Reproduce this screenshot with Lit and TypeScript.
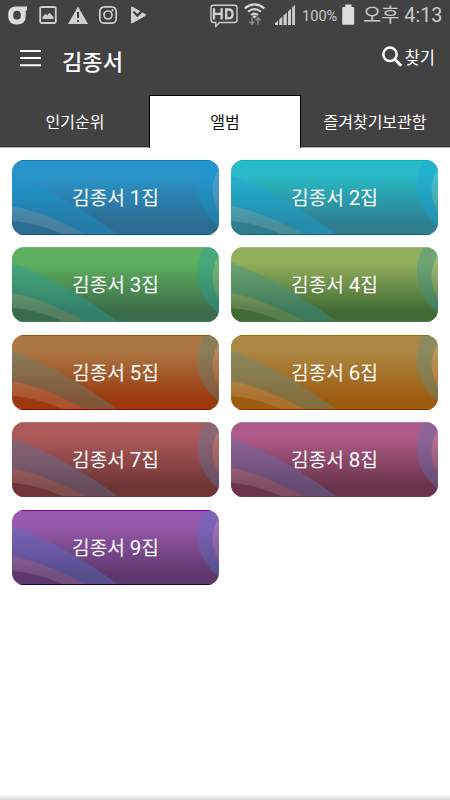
import { LitElement, html, css, svg } from "lit";
import { customElement, property, state } from "lit/decorators.js";
import { classMap } from "lit/directives/class-map.js";

const albums = [
  { n: 1, top: "#2994c9", bottom: "#2c6c91", edge: "#0680bb", foot: "#00588d", band: "#1599d4" },
  { n: 2, top: "#29bac7", bottom: "#2f7d8e", edge: "#08b5c5", foot: "#006c86", band: "#16a6dc" },
  { n: 3, top: "#5eb05f", bottom: "#3b6c49", edge: "#75b777", foot: "#3b7b60", band: "#23a0a7" },
  { n: 4, top: "#92af5c", bottom: "#416b34", edge: "#a1b97a", foot: "#44794e", band: "#36969b" },
  { n: 5, top: "#ab7844", bottom: "#9c390f", edge: "#985505", foot: "#8b0800", band: "#548a83" },
  { n: 6, top: "#ab8844", bottom: "#9e5c0e", edge: "#937100", foot: "#8f2e00", band: "#56908c" },
  { n: 7, top: "#ad5a5a", bottom: "#6f3434", edge: "#b47577", foot: "#6e3f42", band: "#547ba9" },
  { n: 8, top: "#ad5a88", bottom: "#6b334b", edge: "#b4759a", foot: "#6c4058", band: "#5a78b4" },
  { n: 9, top: "#985aad", bottom: "#5e376c", edge: "#81009f", foot: "#200052", band: "#4c78c8" },
];

@customElement("album-card")
export class AlbumCard extends LitElement {
  @property({ attribute: false }) album = albums[0];

  static styles = css`
    :host { display: block; }
    .card {
      position: relative; height: 75px; box-sizing: border-box; overflow: hidden;
      border-radius: 12px; display: flex; align-items: center; justify-content: center;
      color: #fff; font: 19.2px/28px Roboto, "Noto Sans CJK KR", sans-serif; padding: 2px 0 0 0;
    }
    .art { position: absolute; inset: 0; width: 100%; height: 100%; }
    .label { position: relative; white-space: pre; }
    .num { font-size: 20.5px; }
  `;

  render() {
    const a = this.album;
    return html`<div class="card">
      <svg class="art" viewBox="0 0 206 75" preserveAspectRatio="none">
        <defs>
          <linearGradient id="fill" x1="0" y1="0" x2="0" y2="1">
            <stop offset="0.2" stop-color=${a.top}></stop>
            <stop offset="0.86" stop-color=${a.bottom}></stop>
          </linearGradient>
        </defs>
        <rect width="206" height="75" fill="url(#fill)"></rect>
        <path d="M0 15.5C36 29 73 50 106 75H75C52 63 27 51 0 46Z" fill=${a.band} opacity=".37"></path>
        <path d="M0 46C27 51 52 63 75 75H53C34 67 17 62 0 61Z" fill="#fff" opacity=".13"></path>
        <path d="M191 0C181 21 182 48 206 67V52C198 39 197 22 206 8V0Z" fill=${a.band} opacity=".37"></path>
        <path d="M206 8C197 22 198 39 206 52Z" fill="#fff" opacity=".13"></path>
        <path d="M0 .5H206" stroke=${a.edge}></path>
        <path d="M0 74.5H206" stroke=${a.foot}></path>
      </svg>
      <span class="label">김종서 <span class="num">${a.n}</span>집</span>
    </div>`;
  }
}

@customElement("status-bar")
export class StatusBar extends LitElement {
  static styles = css`
    :host {
      display: flex; height: 32px; box-sizing: border-box; justify-content: space-between;
      color: #c8c8c8; font-family: Roboto, "Noto Sans CJK KR", sans-serif;
    }
    .glyphs { width: 150px; height: 32px; flex: none; }
    .right { display: flex; align-items: center; height: 32px; padding-right: 8px; }
    .signals { width: 100px; height: 32px; flex: none; }
    .percent { font-size: 14.6px; width: 37px; white-space: nowrap; }
    .battery { width: 24px; height: 32px; flex: none; }
    .time { font-size: 19.8px; line-height: 32px; white-space: pre; width: 79px; }
  `;

  render() {
    return html`
      <svg class="glyphs" viewBox="0 0 150 32">
        <path d="M27 6.5H17C11 6.5 8.2 9 8.2 15C8.2 21.5 11 24.5 17 24.5C23 24.5 25.7 21.5 25.7 15.5V10.5H27ZM17 10.8C19.7 10.8 20.8 12 20.8 15C20.8 18.5 19.7 19.6 17 19.6C14.3 19.6 13.2 18.5 13.2 15C13.2 12 14.3 10.8 17 10.8Z" fill="#ddd" fill-rule="evenodd"></path>
        <rect x="40.2" y="7" width="15.6" height="16" rx="1.5" fill="none" stroke="#cfcfcf" stroke-width="1.8"></rect>
        <path d="M42.5 19V17L45.5 13.7L47.3 15.5L49.5 12.7L53.5 17V19Z" fill="#cfcfcf"></path>
        <path d="M78 6.5L88 24H68Z" fill="#cfcfcf"></path>
        <path d="M78 12V18M78 20V22" stroke="#424242" stroke-width="2"></path>
        <rect x="99.8" y="6.8" width="16.4" height="16.4" rx="4.5" fill="none" stroke="#cfcfcf" stroke-width="1.7"></rect>
        <circle cx="108" cy="15" r="4" fill="none" stroke="#cfcfcf" stroke-width="1.7"></circle>
        <circle cx="112.6" cy="10.4" r="1.1" fill="#cfcfcf"></circle>
        <path d="M131 7.2C131 6.3 132 6.3 133 7L146 14.4V15.6L133 23C131.6 23.8 131 23.4 131 22Z" fill="#cfcfcf"></path>
        <path d="M133.5 11.8L137.3 15.6L144.5 8.6" fill="none" stroke="#424242" stroke-width="2.2"></path>
      </svg>
      <div class="right">
        <svg class="signals" viewBox="202 0 100 32">
          <path d="M213.5 5.2H234.5Q237 5.2 237 7.7V19.5Q237 22.5 234.5 22.5H219.5L215.8 26.3V22.5H213.5Q211 22.5 211 19.5V7.7Q211 5.2 213.5 5.2Z" fill="none" stroke="#cdcdcd" stroke-width="1.4"></path>
          <path d="M214 8.3V19.5M221.6 8.3V19.5M214 13.8H221.6M226.2 9.5V18.3H228.3Q232.6 18.3 232.6 13.9Q232.6 9.5 228.3 9.5Z" fill="none" stroke="#d2d2d2" stroke-width="2.3"></path>
          <path d="M244.7 8.4Q254.5 .5 264.3 8.4M248 11.8Q254.5 6.4 261 11.8M251 15Q254.5 12.2 258 15" fill="none" stroke="#d5d5d5" stroke-width="2.1"></path>
          <path d="M254.5 18.5L252.4 16.4A3 3 0 0 1 256.6 16.4Z" fill="#d5d5d5"></path>
          <path d="M252 17.5V24M249.5 21.5L252 24.3L254.5 21.5M258 24.5V18M255.5 20.5L258 17.8L260.5 20.5" fill="none" stroke="#858585" stroke-width="1.6"></path>
          <path d="M275 25V23.3L278 20.7V25ZM279.2 25V19.6L282.3 16.7V25ZM283.5 25V15.5L286.8 12.4V25ZM288 25V11.4L291 8.5V25ZM292.2 25V7.5L295 4.8V25Z" fill="#cdcdcd"></path>
        </svg>
        <span class="percent">100%</span>
        <svg class="battery" viewBox="339 0 24 32">
          <path d="M345.3 4.6H351.4V7H353.2Q354.2 7 354.2 8V23.8Q354.2 24.8 353.2 24.8H343.2Q342.2 24.8 342.2 23.8V8Q342.2 7 343.2 7H345.3Z" fill="#dcdcdc"></path>
        </svg>
        <span class="time">오후 4:13</span>
      </div>`;
  }
}

@customElement("app-root")
export class AppRoot extends LitElement {
  @state() private active = 1;

  static styles = css`
    :host {
      display: flex; flex-direction: column; width: 450px; height: 800px; overflow: hidden;
      background: #fff; color: #fff; font-family: "Noto Sans CJK KR", sans-serif;
    }
    .top { background: #424242; }
    .header { height: 64px; display: flex; align-items: flex-start; box-sizing: border-box; padding: 0 15px 0 20px; }
    .menu { width: 22px; height: 22px; margin-top: 16px; flex: none; }
    .title { font-size: 22.1px; line-height: 32px; font-weight: 500; margin: 12px auto 0 20px; }
    .search { display: flex; align-items: center; margin-top: 12px; font-size: 16.5px; line-height: 26px; }
    .lens { width: 23px; height: 24px; }
    .tabs { height: 51px; display: grid; grid-template-columns: repeat(3, 1fr); box-sizing: border-box; border-bottom: 1px solid #303030; }
    .tab { display: flex; align-items: center; justify-content: center; font-size: 16px; line-height: 24px; padding-bottom: 1px; }
    .on { position: relative; z-index: 1; background: #fff; color: #111; margin-bottom: -2px; box-shadow: 1px 0 #000, 0 -1px #000, -1px 0 #000, -1px -1px #000, 1px -1px #000; padding-bottom: 3px; }
    .grid { display: grid; grid-template-columns: 207px 207px; gap: 12.4px 12px; padding: 13px 12px; flex: 1; align-content: start; box-shadow: inset 0 1px #b4b4b4; }
    .shade { height: 5px; background: linear-gradient(#fafafa, #d8d8d8); }
  `;

  render() {
    const tabs = ["인기순위", "앨범", "즐겨찾기보관함"];
    return html`
      <div class="top">
        <status-bar></status-bar>
        <div class="header">
          <svg class="menu" viewBox="0 0 22 22">
            <path d="M0 3H21M0 10H21M0 17.3H21" stroke="#fff" stroke-width="2"></path>
          </svg>
          <span class="title">김종서</span>
          <div class="search">
            <svg class="lens" viewBox="0 0 23 24">
              ${svg`<circle cx="8" cy="9.3" r="6.7" fill="none" stroke="#fff" stroke-width="2.5"></circle>
              <path d="M12.5 14L19.2 20.8" stroke="#fff" stroke-width="3"></path>`}
            </svg>
            <span>찾기</span>
          </div>
        </div>
        <div class="tabs">
          ${tabs.map((t, i) => html`<div class=${classMap({ tab: true, on: i === this.active })} @click=${() => (this.active = i)}>${t}</div>`)}
        </div>
      </div>
      <div class="grid">${albums.map((a) => html`<album-card .album=${a}></album-card>`)}</div>
      <div class="shade"></div>`;
  }
}
